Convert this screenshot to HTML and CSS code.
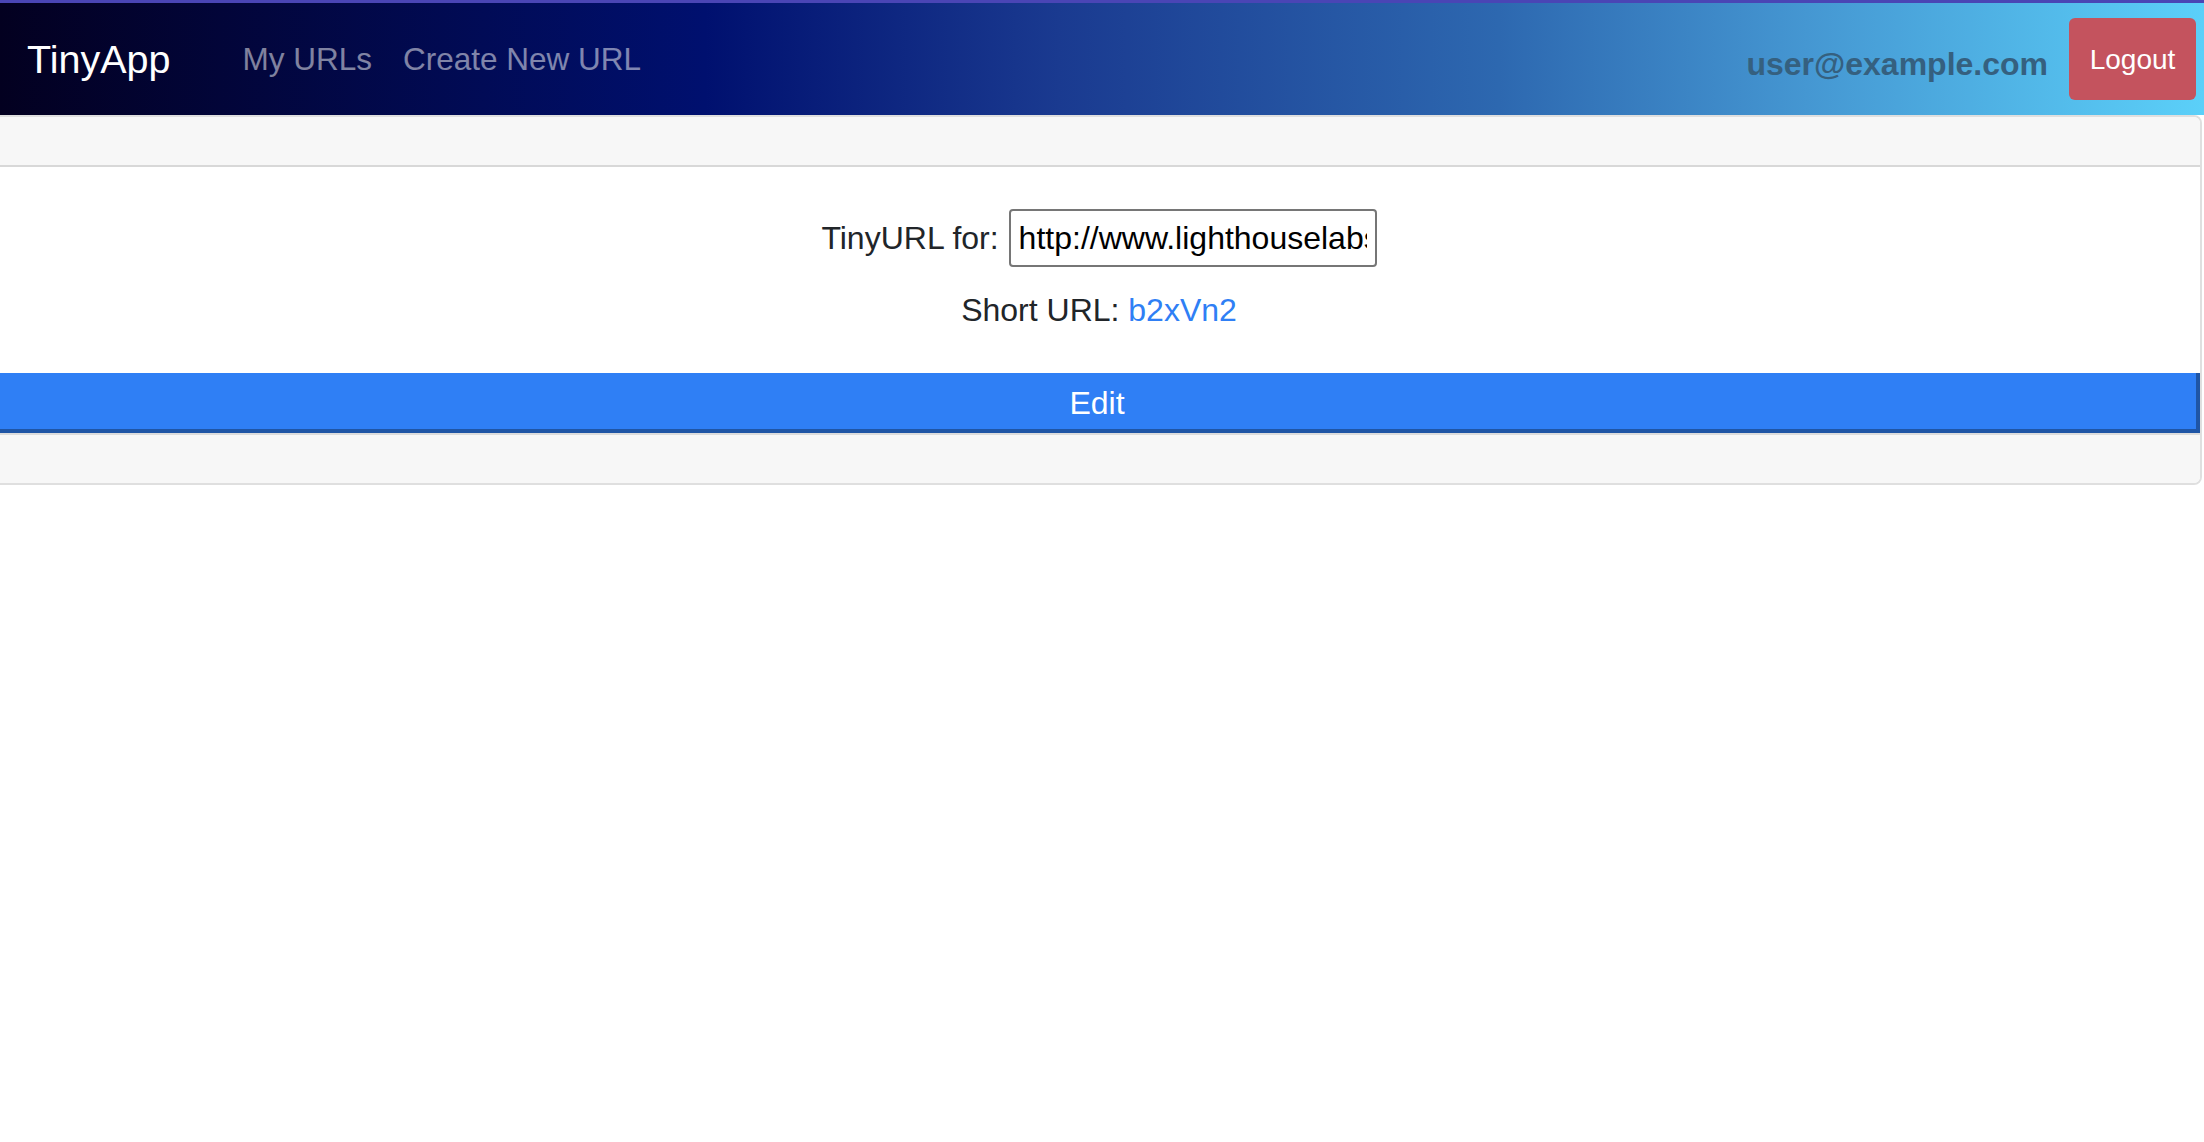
FILE: index.html
```html
<!DOCTYPE html>
<html lang="en">
<head>
<meta charset="utf-8">
<title>TinyApp</title>
<link rel="stylesheet" href="styles.css">
</head>
<body>
<nav class="navbar">
  <a class="brand" href="#">TinyApp</a>
  <div class="nav-links">
    <a class="nav-link" href="#">My URLs</a>
    <a class="nav-link" href="#">Create New URL</a>
  </div>
  <div class="user-area">
    <span class="user-email">user@example.com</span>
    <button class="btn-logout" type="button">Logout</button>
  </div>
</nav>
<main class="page">
  <section class="card">
    <div class="card-header"></div>
    <div class="card-body">
      <div class="url-row">
        <label class="url-label" for="longurl">TinyURL for:</label>
        <input class="url-input" id="longurl" type="text" value="http://www.lighthouselabs.ca">
      </div>
      <p class="short-url">Short URL: <a href="#">b2xVn2</a></p>
    </div>
    <button class="btn-edit" type="button">Edit</button>
    <div class="card-footer"></div>
  </section>
</main>
</body>
</html>
```
FILE: styles.css
```css
* { box-sizing: border-box; }
html, body { margin: 0; padding: 0; }
body {
  font-family: "Liberation Sans", Arial, sans-serif;
  color: #212529;
  background: #fff;
  font-size: 32px;
}
a { text-decoration: none; }

.navbar {
  display: flex;
  align-items: center;
  height: 115px;
  border-top: 3px solid #4a45b5;
  padding: 0 8px 0 27px;
  background: linear-gradient(90deg, #030020 0%, #00106f 32%, #1a3a90 48%, #2d68b0 68%, #4597d2 82%, #5bd0f9 100%);
}
.brand {
  color: #fff;
  font-size: 39.5px;
  line-height: 1;
  padding-top: 2px;
  margin-right: 72px;
}
.nav-links {
  display: flex;
  gap: 31px;
  padding-top: 2px;
}
.nav-link {
  color: rgba(255, 255, 255, 0.5);
  font-size: 31.5px;
  line-height: 1;
}
.user-area {
  margin-left: auto;
  display: flex;
  align-items: center;
  gap: 21px;
}
.user-email {
  font-weight: bold;
  font-size: 32px;
  color: #35607f;
  padding-top: 11px;
}
.btn-logout {
  width: 127px;
  height: 82px;
  border: none;
  border-radius: 6px;
  background: #c4535e;
  color: #fff;
  font-family: inherit;
  font-size: 28px;
  padding: 2px 0 0;
}

.page {
  padding-right: 2px;
}
.card {
  margin-left: -4px;
  border: 2px solid #dfdfdf;
  border-radius: 0 8px 8px 0;
  overflow: hidden;
}
.card-header {
  height: 50px;
  background: #f7f7f7;
  border-bottom: 2px solid #d8d8d8;
}
.card-body {
  padding: 42px 20px 39px;
  display: flex;
  flex-direction: column;
  align-items: center;
  gap: 19px;
}
.url-row {
  display: flex;
  align-items: center;
  gap: 10px;
}
.url-label {
  font-size: 32px;
}
.url-input {
  width: 368px;
  height: 58px;
  border: 2px solid #767676;
  border-radius: 4px;
  padding: 0 8px;
  font-family: inherit;
  font-size: 32px;
  color: #000;
}
.short-url {
  margin: 0;
  line-height: 48px;
}
.short-url a {
  color: #2f7ff5;
}
.btn-edit {
  display: block;
  width: 100%;
  height: 60px;
  border-style: solid;
  border-width: 0 4px 4px 0;
  border-color: #1f55a5;
  background: #2f7ff5;
  color: #fff;
  font-family: inherit;
  font-size: 32px;
  padding: 5px 0 0;
}
.card-footer {
  height: 50px;
  background: #f7f7f7;
  border-top: 2px solid #dcdcdc;
}
```
